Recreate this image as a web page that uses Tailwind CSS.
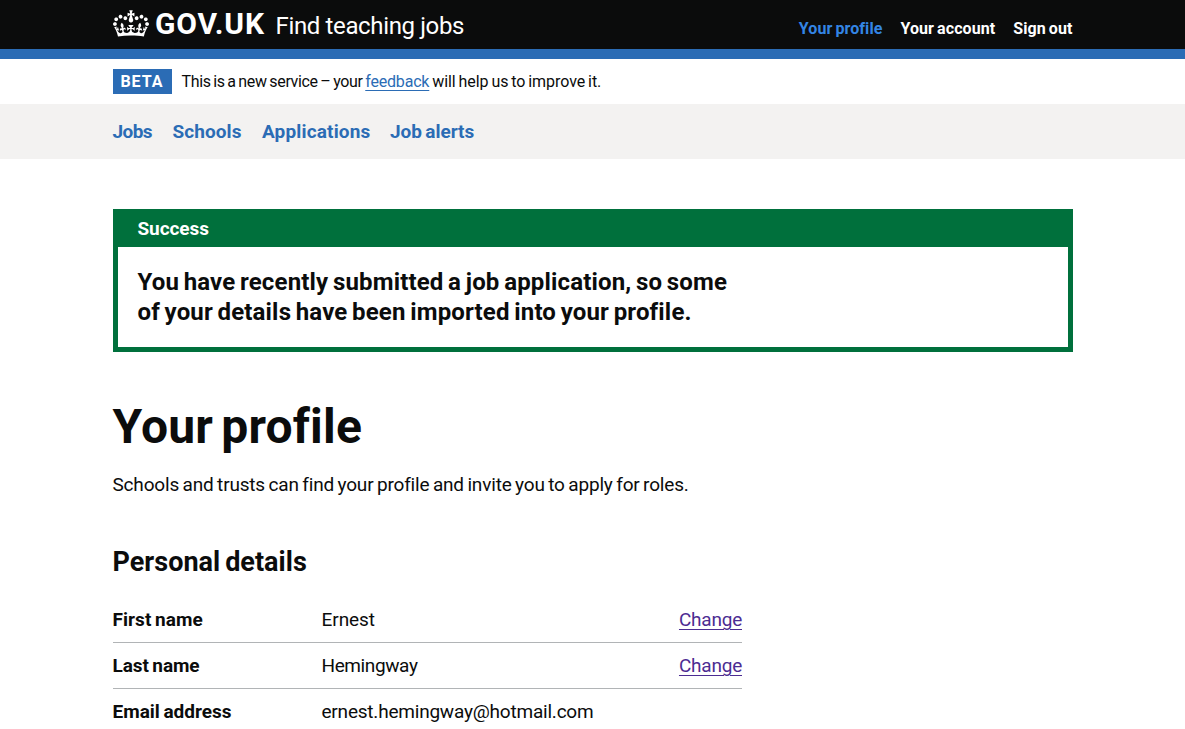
<!DOCTYPE html>
<html lang="en">
<head>
<meta charset="utf-8">
<title>Your profile - Find teaching jobs - GOV.UK</title>
<script src="https://cdn.jsdelivr.net/npm/@tailwindcss/browser@4"></script>
</head>
<body class="h-[729px] overflow-hidden bg-white font-[Roboto,sans-serif] text-[19px] leading-[25px] text-[#0b0c0c]">

<header class="h-[59px] border-b-[10px] border-[#2b6cb5] bg-[#0b0c0c] text-white">
  <div class="mx-auto flex h-[49px] w-[960px] items-start justify-between">
    <a class="flex">
      <svg class="mt-[9.5px] h-[27px] w-[36px]" viewBox="0 0 132 97" fill="currentColor" fill-rule="evenodd" aria-hidden="true"><path d="M25 30.2c3.5 1.5 7.7-.2 9.1-3.7 1.5-3.6-.2-7.8-3.9-9.2-3.6-1.4-7.6.3-9.1 3.9-1.4 3.5.3 7.5 3.9 9zM9 39.5c3.6 1.5 7.8-.2 9.2-3.7 1.5-3.6-.2-7.8-3.9-9.1-3.6-1.5-7.6.2-9.1 3.8-1.4 3.5.3 7.5 3.8 9zM4.4 57.2c3.5 1.5 7.7-.2 9.1-3.8 1.5-3.6-.2-7.7-3.9-9.1-3.5-1.5-7.6.3-9.1 3.8-1.4 3.5.3 7.6 3.9 9.1zm38.3-21.4c3.5 1.5 7.7-.2 9.1-3.8 1.5-3.6-.2-7.7-3.9-9.1-3.6-1.5-7.6.3-9.1 3.8-1.3 3.6.4 7.7 3.9 9.1zm64.4-5.6c-3.6 1.5-7.8-.2-9.1-3.7-1.5-3.6.2-7.8 3.8-9.2 3.6-1.4 7.7.3 9.2 3.9 1.3 3.5-.4 7.5-3.9 9zm15.9 9.3c-3.6 1.5-7.7-.2-9.1-3.7-1.5-3.6.2-7.8 3.7-9.1 3.6-1.5 7.7.2 9.2 3.8 1.5 3.5-.3 7.5-3.8 9zm4.7 17.7c-3.6 1.5-7.8-.2-9.2-3.8-1.5-3.6.2-7.7 3.9-9.1 3.6-1.5 7.7.3 9.2 3.8 1.3 3.5-.4 7.6-3.9 9.1zM89.3 35.8c-3.6 1.5-7.8-.2-9.2-3.8-1.4-3.6.2-7.7 3.9-9.1 3.6-1.5 7.7.3 9.2 3.8 1.4 3.6-.3 7.7-3.9 9.1zM69.7 17.7l8.9 4.7V9.3l-8.9 2.8c-.2-.3-.5-.6-.9-.9L72.4 0H59.6l3.5 11.2c-.3.3-.6.5-.9.9l-8.8-2.8v13.1l8.8-4.7c.3.3.6.7.9.9l-5 15.4v.1c-.2.8-.4 1.6-.4 2.4 0 4.1 3.1 7.5 7 8.1h.2c.3 0 .7.1 1 .1.4 0 .7 0 1-.1h.2c4-.6 7.1-4.1 7.1-8.1 0-.8-.1-1.7-.4-2.4V34l-5.1-15.4c.4-.2.7-.6 1-.9zM66 92.8c16.9 0 32.8 1.1 47.1 3.2 4-16.9 8.9-26.7 14-33.5l-9.6-3.4c1 4.9 1.1 7.2 0 10.2-1.5-1.4-3-4.3-4.2-8.7L108.6 76c2.8-2 5-3.2 7.5-3.3-4.4 9.4-10 11.9-13.6 11.2-4.3-.8-6.3-4.6-5.6-7.9 1-4.7 5.7-5.9 8-.5 4.3-8.7-3-11.4-7.6-8.8 7.1-7.2 7.9-13.5 2.1-21.1-8 6.1-8.1 12.3-4.5 20.8-4.7-5.4-12.1-2.5-9.5 6.2 3.4-5.2 7.9-2 7.2 3.1-.6 4.3-6.4 7.8-13.5 7.2-10.3-.9-10.9-8-11.2-13.8 2.5-.5 7.1 1.8 11 7.3L80.2 60c-4.1 4.4-8 5.3-12.3 5.4 1.4-4.4 8-11.6 8-11.6H55.5s6.4 7.2 7.9 11.6c-4.2-.1-8-1-12.3-5.4l1.4 16.4c3.9-5.5 8.5-7.7 10.9-7.3-.3 5.8-.9 12.8-11.1 13.8-7.2.6-12.9-2.9-13.5-7.2-.7-5 3.8-8.3 7.1-3.1 2.7-8.7-4.6-11.6-9.4-6.2 3.7-8.5 3.6-14.7-4.6-20.8-5.8 7.6-5 13.9 2.2 21.1-4.7-2.6-11.9.1-7.7 8.8 2.3-5.5 7.1-4.2 8.1.5.7 3.3-1.3 7.1-5.7 7.9-3.5.7-9-1.8-13.5-11.2 2.5.1 4.7 1.3 7.5 3.3l-4.7-15.4c-1.2 4.4-2.7 7.2-4.3 8.7-1.1-3-.9-5.3 0-10.2l-9.5 3.4c5 6.9 9.9 16.7 14 33.5 14.8-2.1 30.8-3.2 47.7-3.2z"/></svg>
      <span class="mt-[9px] ml-[6.5px] w-[110px] text-[30px] leading-[30px] font-bold tracking-[0.85px] whitespace-nowrap">GOV.UK</span>
      <span class="mt-[11px] ml-[10.5px] text-[24px] leading-[30px] tracking-[-0.36px] whitespace-nowrap">Find teaching jobs</span>
    </a>
    <nav class="mt-[19px] flex gap-[18px] text-[16px] leading-[20px] font-bold [word-spacing:-1px]">
      <a class="tracking-[0.08px] text-[#3385e4]">Your profile</a>
      <a class="tracking-[0.08px]">Your account</a>
      <a class="tracking-[0.08px]">Sign out</a>
    </nav>
  </div>
</header>

<div class="mx-auto flex h-[45px] w-[960px] items-center text-[16px] leading-[20px]">
  <strong class="flex h-[25px] w-[59px] items-center justify-center bg-[#2b6cb5] font-bold tracking-[1px] text-white">BETA</strong>
  <span class="ml-[10px] whitespace-nowrap [word-spacing:-1px]"><span class="tracking-[-0.34px]">This is a new service – your </span><a class="tracking-[-0.19px] text-[#2b6cb5] underline decoration-1 underline-offset-[3px]">feedback</a><span class="tracking-[-0.06px]"> will help us to improve it.</span></span>
</div>

<nav class="h-[55px] bg-[#f3f2f1] font-bold text-[#2b6cb5]">
  <div class="mx-auto flex h-full w-[960px] items-center">
    <a class="w-[60px] tracking-[-0.6px]">Jobs</a>
    <a class="w-[89.5px] tracking-[0.07px]">Schools</a>
    <a class="w-[128px] tracking-[0.16px]">Applications</a>
    <a class="tracking-[-0.05px] [word-spacing:-1.2px]">Job alerts</a>
  </div>
</nav>

<main class="mx-auto w-[960px] pt-[50px]">
  <section class="border-[5px] border-[#00703c]">
    <h2 class="h-[33px] bg-[#00703c] px-5 pt-[2px] font-bold tracking-[-0.08px] text-white">Success</h2>
    <p class="p-5 text-[24px] leading-[30px] font-bold tracking-[0.16px] [word-spacing:-1.5px]">You have recently submitted a job application, so some<br>of your details have been imported into your profile.</p>
  </section>

  <h1 class="mt-[50px] text-[48px] leading-[50px] font-bold tracking-[0.2px] [word-spacing:-4px]">Your profile</h1>
  <p class="mt-5 tracking-[-0.18px] [word-spacing:-1px]">Schools and trusts can find your profile and invite you to apply for roles.</p>
  <h2 class="mt-[50px] text-[27px] leading-[30px] font-bold tracking-[0.02px] [word-spacing:-1.8px]">Personal details</h2>

  <dl class="mt-5 w-[629.5px] [word-spacing:-1.2px]">
    <div class="flex border-b border-[#b1b4b6] py-[10px]">
      <dt class="w-[209px] font-bold tracking-[0.07px]">First name</dt>
      <dd class="flex-1 tracking-[-0.05px]">Ernest</dd>
      <dd><a class="tracking-[-0.23px] text-[#4c2c92] underline decoration-1 underline-offset-[3px]">Change</a></dd>
    </div>
    <div class="flex border-b border-[#b1b4b6] py-[10px]">
      <dt class="w-[209px] font-bold tracking-[-0.07px]">Last name</dt>
      <dd class="flex-1 tracking-[-0.39px]">Hemingway</dd>
      <dd><a class="tracking-[-0.23px] text-[#4c2c92] underline decoration-1 underline-offset-[3px]">Change</a></dd>
    </div>
    <div class="flex py-[10px]">
      <dt class="w-[209px] font-bold tracking-[0px]">Email address</dt>
      <dd class="flex-1 tracking-[-0.21px]">ernest.hemingway@hotmail.com</dd>
    </div>
  </dl>
</main>
</body>
</html>
